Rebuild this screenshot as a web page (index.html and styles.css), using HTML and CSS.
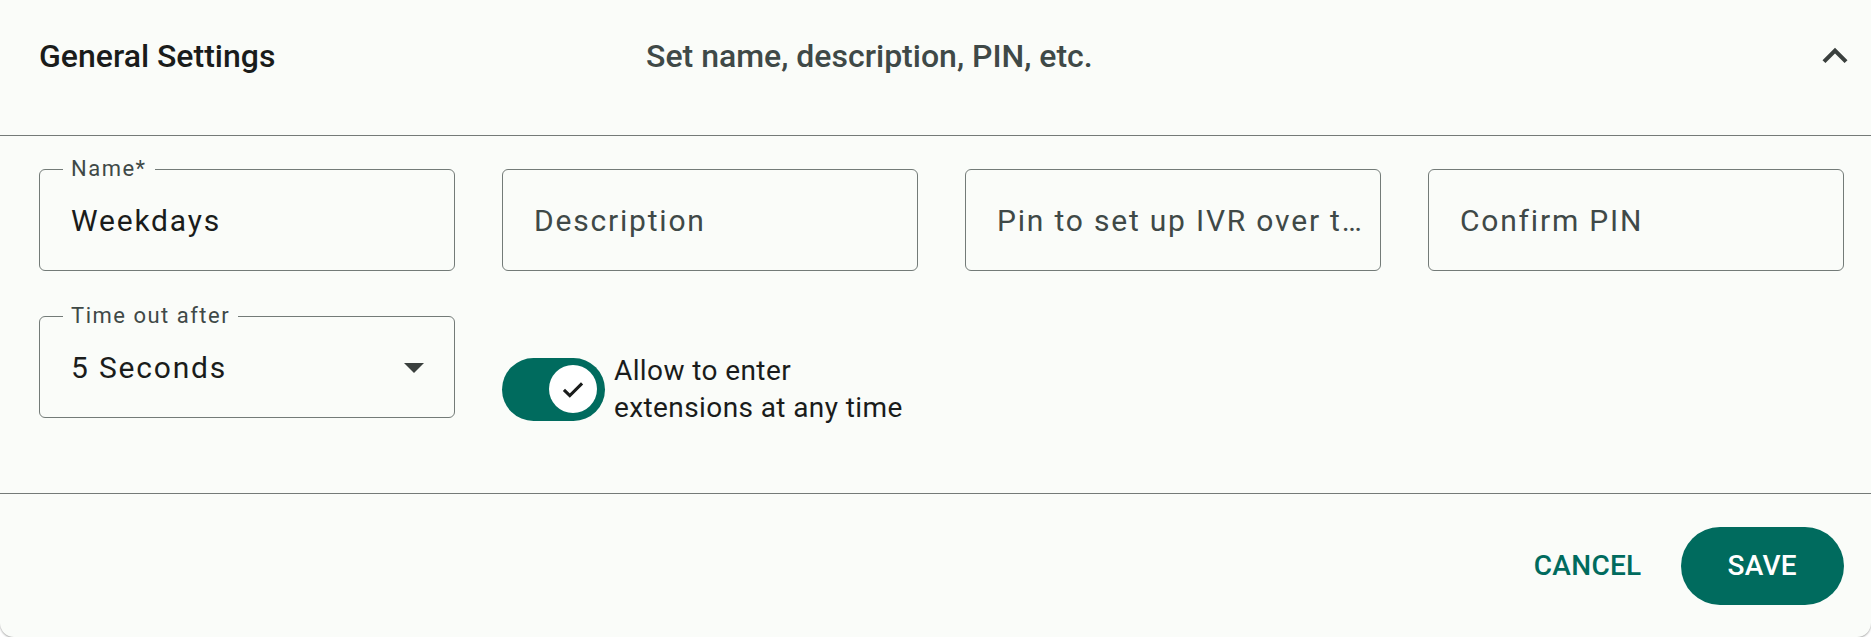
FILE: index.html
```html
<!DOCTYPE html>
<html lang="en">
<head>
<meta charset="utf-8">
<title>General Settings</title>
<link rel="stylesheet" href="styles.css">
</head>
<body>
<div class="card">
  <div class="summary">
    <div class="title">General Settings</div>
    <div class="subtitle">Set name, description, PIN, etc.</div>
    <div class="expand">
      <svg viewBox="0 0 24 24" width="50" height="50"><path d="M12 8l-6 6 1.41 1.41L12 10.83l4.59 4.58L18 14z"/></svg>
    </div>
  </div>
  <div class="details">
    <div class="row">
      <div class="field">
        <span class="label">Name*</span>
        <span class="value">Weekdays</span>
      </div>
      <div class="field">
        <span class="placeholder">Description</span>
      </div>
      <div class="field">
        <span class="placeholder">Pin to set up IVR over the phone</span>
      </div>
      <div class="field">
        <span class="placeholder">Confirm PIN</span>
      </div>
    </div>
    <div class="row">
      <div class="field select">
        <span class="label">Time out after</span>
        <span class="value">5 Seconds</span>
        <svg class="arrow" viewBox="0 0 24 24" width="48" height="48"><path d="M7 10l5 5 5-5z"/></svg>
      </div>
      <div class="switch-group">
        <span class="track">
          <span class="thumb">
            <svg viewBox="0 0 24 24" width="32" height="32"><polyline points="5.2 12.6 9.6 17 18.8 7.8" fill="none" stroke="#1a1c1b" stroke-width="2.3"/></svg>
          </span>
        </span>
        <span class="switch-label">Allow to enter extensions at any time</span>
      </div>
    </div>
  </div>
  <div class="actions">
    <button class="btn text">Cancel</button>
    <button class="btn contained">Save</button>
  </div>
</div>
</body>
</html>
```
FILE: styles.css
```css
body {
  margin: 0;
  background: #ffffff;
  font-family: Roboto, "Noto Sans", sans-serif;
}

.card {
  background: #fafcf9;
  height: 637px;
  border-radius: 0 0 14px 14px;
  box-shadow: 0 1px 2px rgba(0, 0, 0, 0.35);
}

.summary {
  height: 136px;
  box-sizing: border-box;
  border-bottom: 1px solid #747a78;
  display: flex;
  align-items: center;
  padding: 0 11px 23px 39px;
}

.title {
  width: 607px;
  flex-shrink: 0;
  font-size: 32px;
  font-weight: 500;
  color: #1a1c1b;
}

.subtitle {
  font-size: 32px;
  font-weight: 500;
  color: #3f4947;
}

.expand {
  margin-left: auto;
  width: 50px;
  height: 50px;
  fill: #3a403e;
}

.expand svg {
  display: block;
}

.details {
  height: 358px;
  box-sizing: border-box;
  border-bottom: 1px solid #747a78;
  padding: 33px 28px 0 39px;
  display: flex;
  flex-direction: column;
  gap: 45px;
}

.row {
  display: grid;
  grid-template-columns: repeat(4, 416px);
  column-gap: 47px;
  align-items: start;
}

.field {
  position: relative;
  height: 102px;
  box-sizing: border-box;
  border: 1px solid #737b78;
  border-radius: 6px;
  display: flex;
  align-items: center;
  padding: 0 12px 0 31px;
}

.label {
  position: absolute;
  top: -12px;
  left: 23px;
  padding: 0 8px;
  background: #fafcf9;
  font-size: 22px;
  line-height: 22px;
  letter-spacing: 1.5px;
  color: #3f4947;
}

.value,
.placeholder {
  font-size: 30px;
  letter-spacing: 1.8px;
  white-space: nowrap;
}

.value {
  color: #1a1c1b;
}

.placeholder {
  color: #3f4947;
  min-width: 0;
  overflow: hidden;
  text-overflow: ellipsis;
}

.select {
  padding-right: 16px;
}

.arrow {
  margin-left: auto;
  fill: #3a403e;
  display: block;
}

.switch-group {
  grid-column: 2 / span 2;
  display: flex;
  align-items: center;
  gap: 9px;
  margin-top: 36px;
}

.track {
  width: 103px;
  height: 63px;
  border-radius: 32px;
  background: #006b5e;
  display: flex;
  align-items: center;
  justify-content: flex-end;
  padding-right: 8px;
  box-sizing: border-box;
  flex-shrink: 0;
}

.thumb {
  width: 48px;
  height: 48px;
  border-radius: 50%;
  background: #ffffff;
  display: flex;
  align-items: center;
  justify-content: center;
}

.thumb svg {
  display: block;
}

.switch-label {
  max-width: 300px;
  font-size: 28px;
  line-height: 37px;
  letter-spacing: 0.4px;
  color: #1a1c1b;
}

.actions {
  height: 143px;
  box-sizing: border-box;
  display: flex;
  justify-content: flex-end;
  align-items: center;
  gap: 23px;
  padding-right: 27px;
}

.btn {
  font-family: Roboto, "Noto Sans", sans-serif;
  font-size: 28px;
  font-weight: 500;
  text-transform: uppercase;
  letter-spacing: 0.3px;
  border: none;
  cursor: pointer;
  height: 78px;
}

.btn.text {
  background: none;
  color: #006b5e;
  padding: 0 16px;
}

.btn.contained {
  background: #006b5e;
  color: #ffffff;
  padding: 0 47px;
  border-radius: 39px;
}
```
